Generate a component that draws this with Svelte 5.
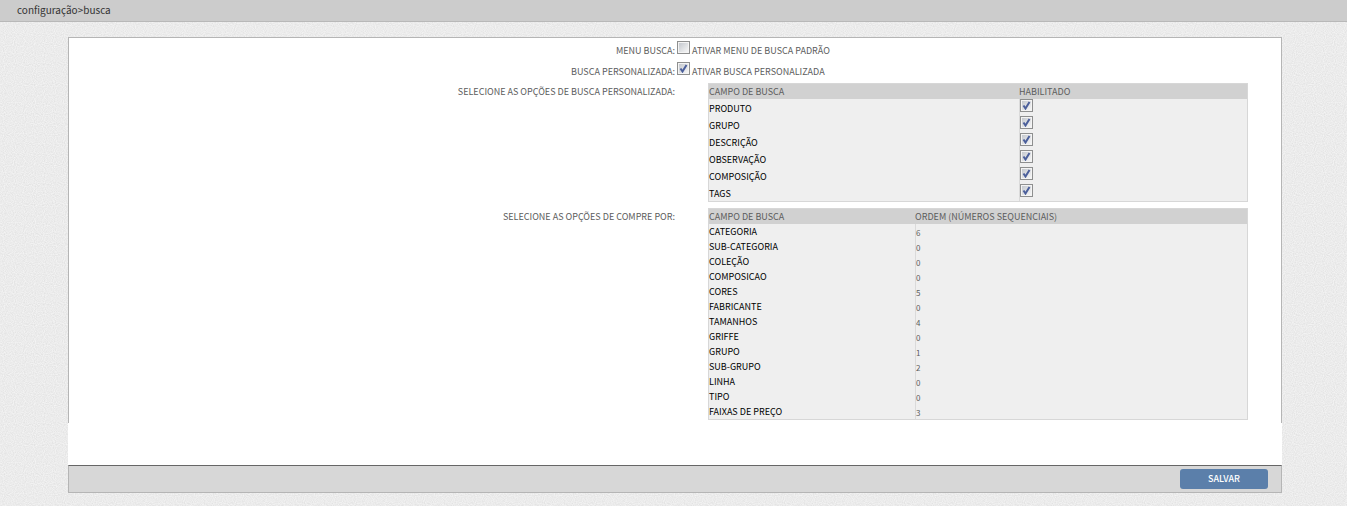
<script lang="ts">
  let menuBusca = $state(false);
  let buscaPersonalizada = $state(true);

  let campos = $state([
    { nome: 'PRODUTO', habilitado: true },
    { nome: 'GRUPO', habilitado: true },
    { nome: 'DESCRIÇÃO', habilitado: true },
    { nome: 'OBSERVAÇÃO', habilitado: true },
    { nome: 'COMPOSIÇÃO', habilitado: true },
    { nome: 'TAGS', habilitado: true }
  ]);

  let comprePor = $state([
    { nome: 'CATEGORIA', ordem: '6' },
    { nome: 'SUB-CATEGORIA', ordem: '0' },
    { nome: 'COLEÇÃO', ordem: '0' },
    { nome: 'COMPOSICAO', ordem: '0' },
    { nome: 'CORES', ordem: '5' },
    { nome: 'FABRICANTE', ordem: '0' },
    { nome: 'TAMANHOS', ordem: '4' },
    { nome: 'GRIFFE', ordem: '0' },
    { nome: 'GRUPO', ordem: '1' },
    { nome: 'SUB-GRUPO', ordem: '2' },
    { nome: 'LINHA', ordem: '0' },
    { nome: 'TIPO', ordem: '0' },
    { nome: 'FAIXAS DE PREÇO', ordem: '3' }
  ]);
</script>

<nav class="breadcrumb">configuração&gt;busca</nav>

<form class="page" onsubmit={(e) => e.preventDefault()}>
  <div class="panel">
    <div class="row">
      <span class="title">MENU BUSCA:</span>
      <label class="option">
        <input type="checkbox" bind:checked={menuBusca} />
        <span>ATIVAR MENU DE BUSCA PADRÃO</span>
      </label>
    </div>
    <div class="row">
      <span class="title">BUSCA PERSONALIZADA:</span>
      <label class="option">
        <input type="checkbox" bind:checked={buscaPersonalizada} />
        <span>ATIVAR BUSCA PERSONALIZADA</span>
      </label>
    </div>
    <div class="row block">
      <span class="title" id="opcoes-busca">SELECIONE AS OPÇÕES DE BUSCA PERSONALIZADA:</span>
      <table class="campos" aria-labelledby="opcoes-busca">
        <thead>
          <tr><th>CAMPO DE BUSCA</th><th>HABILITADO</th></tr>
        </thead>
        <tbody>
          {#each campos as campo, i}
            <tr>
              <td><label for="campo-{i}">{campo.nome}</label></td>
              <td><input id="campo-{i}" type="checkbox" bind:checked={campo.habilitado} /></td>
            </tr>
          {/each}
        </tbody>
      </table>
    </div>
    <div class="row block">
      <span class="title" id="opcoes-compre">SELECIONE AS OPÇÕES DE COMPRE POR:</span>
      <table class="ordem" aria-labelledby="opcoes-compre">
        <thead>
          <tr><th>CAMPO DE BUSCA</th><th>ORDEM (NÚMEROS SEQUENCIAIS)</th></tr>
        </thead>
        <tbody>
          {#each comprePor as item, i}
            <tr>
              <td><label for="ordem-{i}">{item.nome}</label></td>
              <td><input id="ordem-{i}" type="text" bind:value={item.ordem} /></td>
            </tr>
          {/each}
        </tbody>
      </table>
    </div>
  </div>
  <div class="spacer"></div>
  <footer class="actions">
    <button type="submit">SALVAR</button>
  </footer>
</form>

<style>
  :global(body) {
    background-color: #ebebeb;
    background-image: url("data:image/svg+xml,%3Csvg xmlns='http://www.w3.org/2000/svg' width='120' height='120'%3E%3Cfilter id='n' x='0' y='0' width='1' height='1' color-interpolation-filters='sRGB'%3E%3CfeTurbulence type='fractalNoise' baseFrequency='0.9' numOctaves='1' stitchTiles='stitch'/%3E%3CfeColorMatrix values='0.12 0 0 0 0.863 0.12 0 0 0 0.863 0.12 0 0 0 0.863 0 0 0 0 1'/%3E%3C/filter%3E%3Crect width='120' height='120' filter='url(%23n)'/%3E%3C/svg%3E");
    color: #5c5c5c;
    font-family: "Noto Sans CJK JP", "Open Sans", sans-serif;
    font-size: 9px;
    line-height: 15px;
  }
  .breadcrumb {
    box-sizing: border-box;
    height: 22px;
    padding: 2px 17px;
    background: #ccc;
    border-bottom: 1px solid #b8b8b8;
    color: #333;
    font-size: 10px;
  }
  .page {
    margin: 15px 65px 0 68px;
  }
  .panel {
    border: 1px solid #b5b5b5;
    border-bottom: none;
    background: #fff;
  }
  .row {
    display: grid;
    grid-template-columns: 1fr 1fr;
    height: 21px;
    align-items: start;
    padding-top: 3px;
    box-sizing: border-box;
  }
  .row.block {
    height: auto;
    padding: 3px 0;
  }
  .title {
    text-align: right;
    margin-top: 2px;
  }
  .block .title {
    margin-top: 1px;
  }
  .option {
    display: flex;
    gap: 2px;
    padding-left: 2px;
  }
  .option span {
    margin-top: 2px;
  }
  table {
    margin: 0 33px;
    border: 1px solid #d7d7d7;
    border-collapse: separate;
    border-spacing: 0;
    table-layout: fixed;
    background: #efefef;
  }
  th, td {
    height: 15px;
    padding: 0;
    text-align: left;
    vertical-align: top;
    font-weight: normal;
  }
  th {
    background: #d1d1d1;
  }
  tbody {
    color: #000;
  }
  td + td {
    border-left: 1px solid #dadada;
  }
  td label {
    display: block;
  }
  .campos td {
    height: 17px;
  }
  .campos td label {
    margin-top: 2px;
  }
  .campos th:first-child {
    width: 310px;
  }
  .ordem th:first-child {
    width: 206px;
  }
  input[type='checkbox'] {
    appearance: none;
    display: block;
    box-sizing: border-box;
    width: 13px;
    height: 13px;
    margin: 0;
    padding: 1px;
    border: 1px solid #8e8f8f;
    background: linear-gradient(135deg, #c4c8ce, #f6f6f6) content-box, #f4f4f4;
  }
  input[type='checkbox']:checked {
    background:
      url("data:image/svg+xml,%3Csvg xmlns='http://www.w3.org/2000/svg' width='9' height='9'%3E%3Cpath d='M1.5 4.5 3.5 7.5 7.5 1' fill='none' stroke='%234b5f9b' stroke-width='2'/%3E%3C/svg%3E") content-box no-repeat,
      linear-gradient(135deg, #c4c8ce, #f6f6f6) content-box,
      #f4f4f4;
  }
  input[type='text'] {
    display: block;
    box-sizing: border-box;
    width: 100%;
    height: 15px;
    margin: 0;
    padding: 2px 0 0;
    border: none;
    background: transparent;
    color: #5c5c5c;
    font-family: inherit;
    font-size: 8px;
    line-height: 12px;
  }
  .spacer {
    height: 42px;
    background: #fff;
  }
  .actions {
    display: flex;
    justify-content: flex-end;
    padding: 3px 13px;
    background: #d7d7d7;
    border: 1px solid #b5b5b5;
    border-top-color: #666;
  }
  button {
    width: 88px;
    height: 20px;
    padding: 0;
    border: none;
    border-radius: 3px;
    background: #5b7faa;
    color: #fff;
    font-family: inherit;
    font-size: 9px;
    font-weight: 500;
    line-height: 20px;
    cursor: pointer;
  }
</style>
